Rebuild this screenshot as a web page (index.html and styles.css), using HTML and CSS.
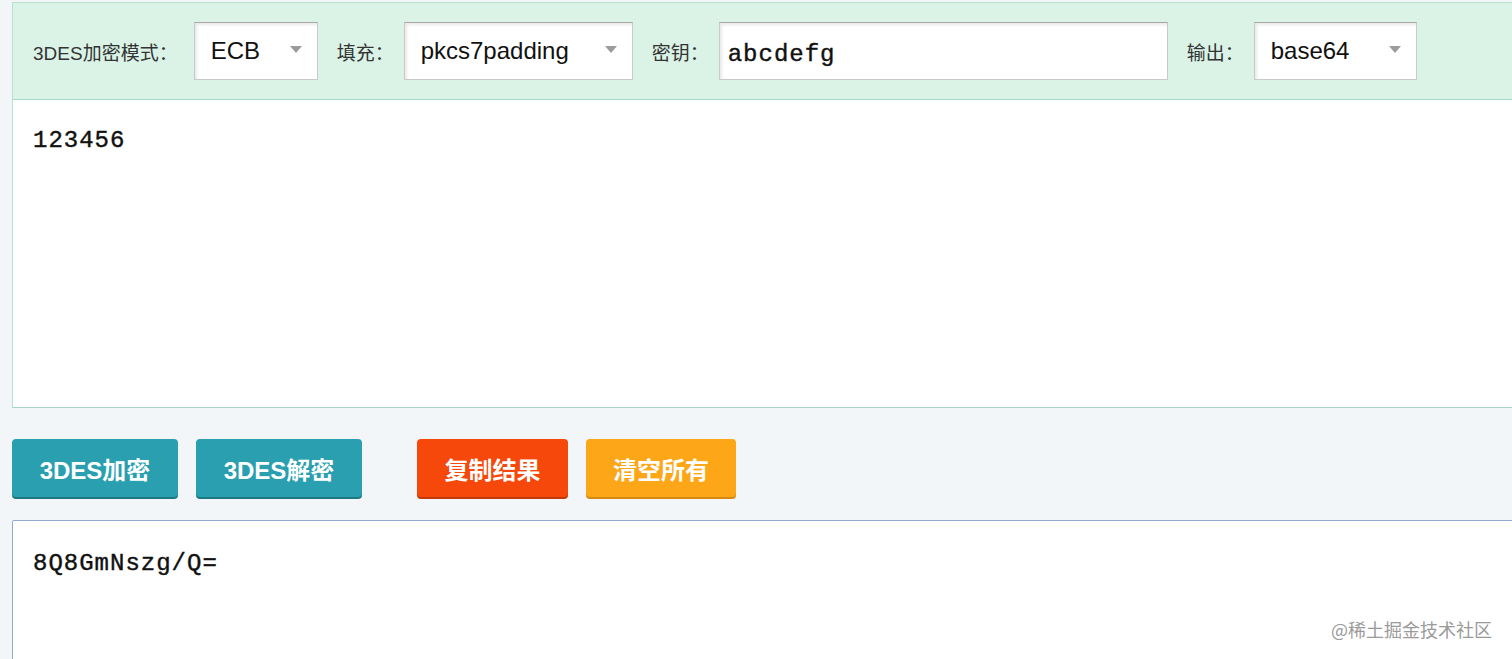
FILE: index.html
```html
<!DOCTYPE html>
<html lang="zh">
<head>
<meta charset="utf-8">
<title>3DES加密</title>
<link rel="stylesheet" href="styles.css">
</head>
<body>
<div class="page">
  <section class="panel">
    <div class="toolbar">
      <span class="label label-first">3DES加密模式：</span>
      <div class="select sel-mode"><span>ECB</span><i class="arrow"></i></div>
      <span class="label">填充：</span>
      <div class="select sel-pad"><span>pkcs7padding</span><i class="arrow"></i></div>
      <span class="label">密钥：</span>
      <div class="keyinput">abcdefg</div>
      <span class="label">输出：</span>
      <div class="select sel-out"><span>base64</span><i class="arrow"></i></div>
    </div>
    <div class="input-area">123456</div>
  </section>
  <div class="actions">
    <button class="btn btn-teal">3DES加密</button>
    <button class="btn btn-teal">3DES解密</button>
    <button class="btn btn-red btn-sep">复制结果</button>
    <button class="btn btn-orange">清空所有</button>
  </div>
  <section class="output">8Q8GmNszg/Q=</section>
</div>
<div class="watermark">@稀土掘金技术社区</div>
</body>
</html>
```

FILE: styles.css
```css
html, body {
  margin: 0;
  padding: 0;
  height: 100%;
  overflow: hidden;
}
body {
  background: #f3f6f8;
  font-family: "Liberation Sans", "Noto Sans CJK SC", sans-serif;
  color: #333;
}
.page {
  padding: 2px 0 0 12px;
  width: 1520px;
}
.panel {
  border: 1px solid #b9e0cf;
  border-bottom-color: #a6d6c2;
  background: #fff;
}
.toolbar {
  display: flex;
  align-items: center;
  height: 96px;
  background: #dbf3e7;
  border-bottom: 1px solid #aad9c5;
  padding-left: 20px;
}
.label {
  font-size: 19px;
  color: #333;
  margin-left: 19px;
  margin-right: 10px;
  white-space: nowrap;
}
.label-first {
  margin-left: 0;
  margin-right: 16px;
}
.select, .keyinput {
  box-sizing: border-box;
  height: 58px;
  background: #fff;
  border: 1px solid #c9c9c9;
  border-top-color: #a8a8a8;
  box-shadow: inset 2px 2px 3px rgba(0, 0, 0, 0.09);
  display: flex;
  align-items: center;
}
.select {
  justify-content: space-between;
  padding: 0 15px 0 16px;
  font-size: 24px;
  color: #111;
}
.sel-mode { width: 124px; }
.sel-pad { width: 229px; }
.sel-out { width: 163px; }
.arrow {
  width: 0;
  height: 0;
  border-left: 6px solid transparent;
  border-right: 6px solid transparent;
  border-top: 7px solid #9c9c9c;
  margin-top: -4px;
}
.keyinput {
  width: 449px;
  padding-left: 8px;
  font-family: "Liberation Mono", monospace;
  font-size: 24px;
  letter-spacing: 1px;
  -webkit-text-stroke: 0.4px #111;
  color: #111;
  padding-top: 6px;
}
.input-area {
  height: 307px;
  box-sizing: border-box;
  padding: 27px 20px 0;
  font-family: "Liberation Mono", monospace;
  font-size: 24px;
  letter-spacing: 1px;
  -webkit-text-stroke: 0.4px #111;
  color: #111;
}
.actions {
  display: flex;
  gap: 18px;
  padding: 31px 0 0;
  height: 58px;
}
.btn {
  height: 58px;
  border: none;
  border-radius: 4px;
  color: #fff;
  font-family: "Liberation Sans", "Noto Sans CJK SC", sans-serif;
  font-weight: bold;
  font-size: 24px;
  padding: 0;
  cursor: pointer;
}
.btn-teal {
  width: 166px;
  background: #299fb0;
  box-shadow: 0 2px 0 #1d7884;
}
.btn-red {
  width: 151px;
  background: #f5480a;
  box-shadow: 0 2px 0 #c1380a;
}
.btn-orange {
  width: 150px;
  background: #fca618;
  box-shadow: 0 2px 0 #d7880e;
}
.btn-sep {
  margin-left: 37px;
}
.output {
  margin-top: 23px;
  height: 139px;
  box-sizing: border-box;
  background: #fff;
  border: 1px solid #8eaad0;
  border-bottom: none;
  border-radius: 2px 0 0 0;
  padding: 29px 20px 0;
  font-family: "Liberation Mono", monospace;
  font-size: 24px;
  letter-spacing: 1px;
  -webkit-text-stroke: 0.4px #111;
  color: #111;
}
.watermark {
  position: absolute;
  right: 20px;
  bottom: 17px;
  font-family: "Noto Sans CJK SC", sans-serif;
  font-size: 18px;
  color: #9a9a9a;
  text-shadow: 0 0 1px #fff;
}
```
